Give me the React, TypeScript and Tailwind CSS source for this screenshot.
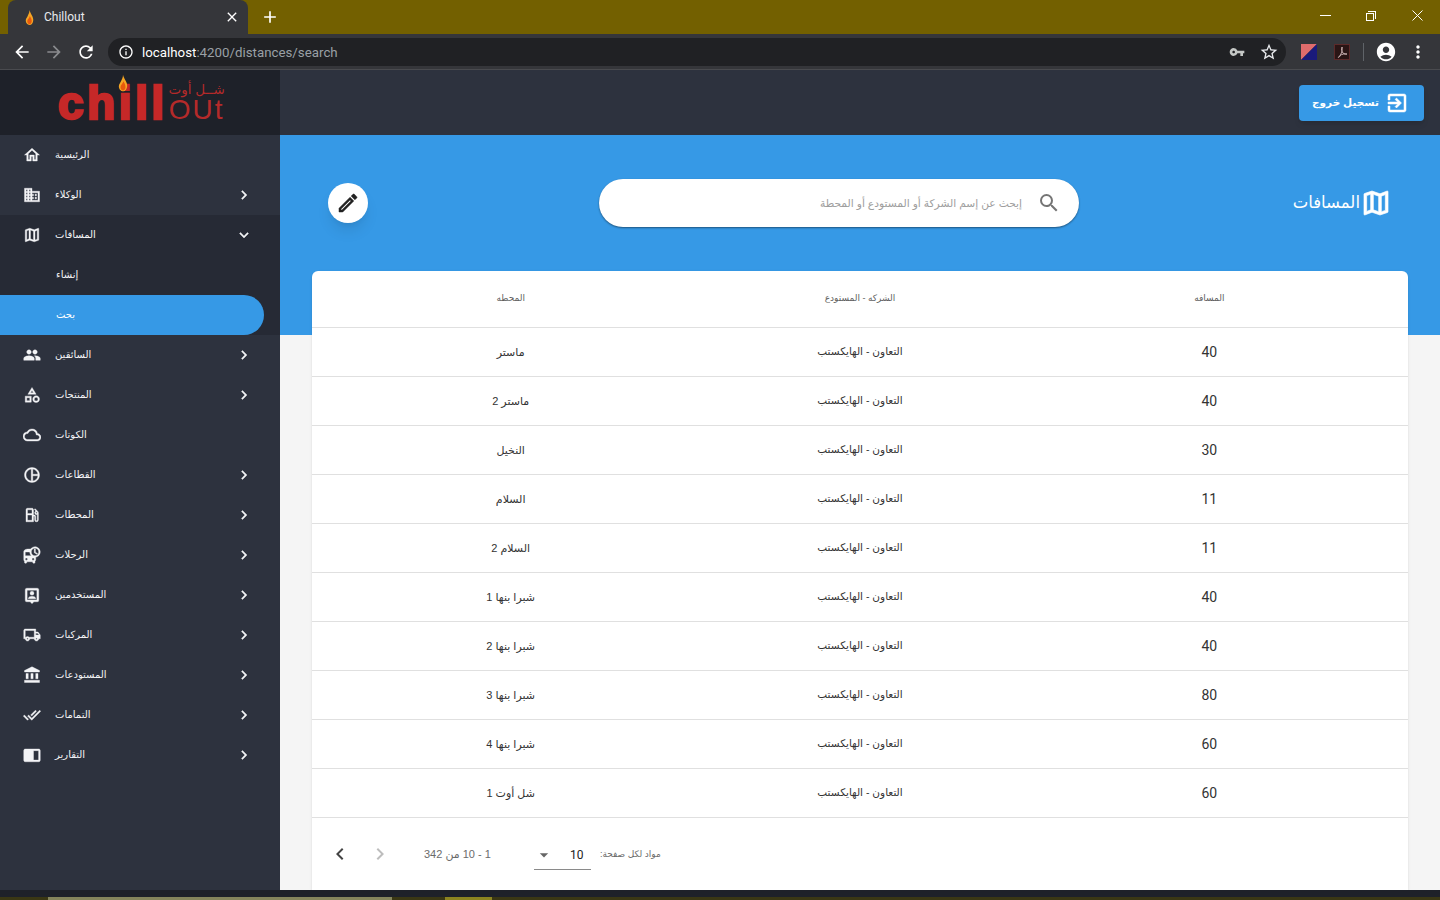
import {
  MdOutlineHome, MdDomain, MdOutlineMap, MdPeople, MdOutlineCategory, MdOutlineCloud, MdOutlinePieChart,
  MdOutlineLocalGasStation, MdDepartureBoard, MdOutlineLocalShipping,
  MdAccountBalance, MdDoneAll, MdChevronRight, MdExpandMore, MdOutlineEdit, MdSearch,
  MdChevronLeft, MdArrowDropDown, MdOutlineExitToApp, MdArrowBack, MdArrowForward, MdRefresh,
  MdInfoOutline, MdVpnKey, MdStarBorder, MdAccountCircle, MdMoreVert, MdClose, MdAdd,
} from "react-icons/md";

const arabic = "font-['Liberation_Sans','DejaVu_Sans',sans-serif]";
// thickens the material glyphs, the empty bounding box path must stay unstroked
const bold = "stroke-current stroke-[0.5] [&_path[fill='none']]:stroke-none";

function UsersIcon(props: { className?: string }) {
  return (
    <svg viewBox="0 0 24 24" fill="currentColor" {...props}>
      <path fillRule="evenodd" d="M5 3h14a2 2 0 0 1 2 2v14a2 2 0 0 1-2 2h-4.5L12 23.5 9.5 21H5a2 2 0 0 1-2-2V5a2 2 0 0 1 2-2zm.5 2.5v13h13v-13z" />
      <circle cx="12" cy="9.5" r="2.6" />
      <path d="M7 17c0-2.5 3-3.5 5-3.5s5 1 5 3.5z" />
    </svg>
  );
}

function ReportsIcon(props: { className?: string }) {
  return (
    <svg viewBox="0 0 24 24" fill="currentColor" {...props}>
      <path fillRule="evenodd" d="M3 4h18c1.1 0 2 .9 2 2v13c0 1.1-.9 2-2 2H3c-1.100 0-2-.9-2-2V6c0-1.100.9-2 2-2zm11 2.200V18.800h6.800V6.200z" />
    </svg>
  );
}

const menu = [
  { label: "الرئيسية", icon: MdOutlineHome },
  { label: "الوكلاء", icon: MdDomain, arrow: true },
  { label: "المسافات", icon: MdOutlineMap, open: true },
  { label: "السائقين", icon: MdPeople, arrow: true },
  { label: "المنتجات", icon: MdOutlineCategory, arrow: true },
  { label: "الكوتات", icon: MdOutlineCloud },
  { label: "القطاعات", icon: MdOutlinePieChart, arrow: true },
  { label: "المحطات", icon: MdOutlineLocalGasStation, arrow: true },
  { label: "الرحلات", icon: MdDepartureBoard, arrow: true },
  { label: "المستخدمين", icon: UsersIcon, arrow: true },
  { label: "المركبات", icon: MdOutlineLocalShipping, arrow: true },
  { label: "المستودعات", icon: MdAccountBalance, arrow: true },
  { label: "التمامات", icon: MdDoneAll, arrow: true },
  { label: "التقارير", icon: ReportsIcon, arrow: true },
];

const rows = [
  ["40", "ماستر"],
  ["40", "ماستر 2"],
  ["30", "النخيل"],
  ["11", "السلام"],
  ["11", "السلام 2"],
  ["40", "شبرا بنها 1"],
  ["40", "شبرا بنها 2"],
  ["80", "شبرا بنها 3"],
  ["60", "شبرا بنها 4"],
  ["60", "شل أوت 1"],
];

function Flame({ className }: { className: string }) {
  return (
    <svg viewBox="0 0 12 20" className={className}>
      <path d="M6 0C7 5 11 8 11 13c0 4-2 7-5 7s-5-3-5-6c0-3 2-4 3-7 1-2 2-4 2-7z" fill="#f5a524" />
      <path d="M6.500 8c1 2 2.500 4 2.500 7 0 2-1.500 4-3 4s-3-2-3-4c0-3 3-4 3.500-7z" fill="#e8590c" />
    </svg>
  );
}

function MenuRow({ item }: { item: (typeof menu)[number] }) {
  const Icon = item.icon;
  return (
    <div className="flex h-10 items-center pl-6 pr-[27px] text-[#f3f4f6]">
      <Icon className={`-ml-px h-4.5 w-4.5 shrink-0 ${bold}`} />
      <span dir="rtl" className={`ml-3.5 pb-0.5 text-[10px] ${arabic}`}>{item.label}</span>
      <span className="flex-1" />
      {item.arrow && <MdChevronRight className={`h-4.5 w-4.5 ${bold}`} />}
      {item.open && <MdExpandMore className={`h-4.5 w-4.5 ${bold}`} />}
    </div>
  );
}

function Sidebar() {
  return (
    <aside className="w-[280px] shrink-0 bg-[#2d323e]">
      <div className="relative h-[65px] bg-[#1e2129]">
        <div className="flex h-full items-end pb-[15px] pl-[58px]">
          <span className="font-['Liberation_Sans',sans-serif] text-[46px] font-bold leading-[33px] tracking-[3.500px] text-[#c62828] [-webkit-text-stroke:2.5px_#c62828]">chill</span>
          <div className="ml-[1px] flex flex-col items-center">
            <span dir="rtl" className={`mb-[3px] text-[13.500px] leading-[14px] text-[#b52a2a] ${arabic}`}>شــل أوت</span>
            <span className="font-['Liberation_Sans',sans-serif] text-[28px] leading-[20px] tracking-[2px] text-[#b52a2a]">OUt</span>
          </div>
        </div>
        <Flame className="absolute left-[118px] top-[3px] h-5 w-2.5" />
      </div>
      <nav>
        <MenuRow item={menu[0]} />
        <MenuRow item={menu[1]} />
        <div className="h-[120px] bg-[#262a35]">
          <MenuRow item={menu[2]} />
          <div className="flex h-10 items-center pl-14 text-[#f3f4f6]">
            <span dir="rtl" className={`pb-0.5 text-[10px] ${arabic}`}>إنشاء</span>
          </div>
          <div className="mr-4 flex h-10 items-center rounded-r-[20px] bg-[#3699e6] pl-14 text-white">
            <span dir="rtl" className={`pb-0.5 text-[10px] ${arabic}`}>بحث</span>
          </div>
        </div>
        {menu.slice(3).map((item) => <MenuRow key={item.label} item={item} />)}
      </nav>
    </aside>
  );
}

function BrowserChrome() {
  return (
    <div className="h-[70px] shrink-0">
      <div className="flex h-[34px] items-end bg-[#736000] pl-2">
        <div className="flex h-[34px] w-[240px] items-center rounded-t-lg bg-[#35363a] pl-[17px] pr-2 text-white">
          <Flame className="mr-2.5 h-[15px] w-[9px]" />
          <span className="flex-1 font-['Roboto',sans-serif] text-[12px] text-[#e8eaed]">Chillout</span>
          <MdClose className="h-4 w-4" />
        </div>
        <MdAdd className="mb-[7px] ml-[12px] h-5 w-5 text-white" />
        <div className="flex-1" />
        <div className="mb-[13px] flex items-center pr-[17px] text-white">
          <span className="h-px w-[11px] bg-white" />
          <span className="relative ml-[35px] mt-[2px] h-2 w-2 border border-white">
            <span className="absolute -right-[3px] -top-[3px] h-2 w-2 border-r border-t border-white" />
          </span>
          <svg viewBox="0 0 11 11" className="ml-[38px] h-[11px] w-[11px]" stroke="currentColor" strokeWidth="1">
            <path d="M0.500 0.500l10 10M10.500 0.500l-10 10" />
          </svg>
        </div>
      </div>
      <div className="flex h-[36px] items-center border-b border-[#4a4b4f] bg-[#35363a] pl-3 pr-3 pt-px">
        <MdArrowBack className="h-5 w-5 text-white" />
        <MdArrowForward className="ml-3 h-5 w-5 text-[#8a8b8e]" />
        <MdRefresh className="ml-3 h-5 w-5 text-white" />
        <div className="ml-3 flex h-7 flex-1 items-center rounded-full bg-[#202124] pl-2.5 pr-[7px]">
          <MdInfoOutline className="h-4 w-4 text-white" />
          <span className="ml-2 pt-px font-['Roboto',sans-serif] text-[13.300px] text-white">localhost<span className="text-[#9aa0a6]">:4200/distances/search</span></span>
          <span className="flex-1" />
          <MdVpnKey className="mr-3.5 h-4 w-4 text-[#c4c7c5]" />
          <MdStarBorder className="h-5 w-5 text-[#e8eaed]" />
        </div>
        <svg viewBox="0 0 16 16" className="ml-[15px] h-4 w-4">
          <path d="M0 0h16L0 16z" fill="#e06c6c" /><path d="M16 0v16H0z" fill="#1a1a7a" />
        </svg>
        <svg viewBox="0 0 16 16" className="ml-[17px] h-4 w-4">
          <rect x="0.500" y="0.500" width="15" height="15" fill="#2a1515" stroke="#5c2a2a" />
          <path d="M8 3c-1 2 0 5 1 6s3 1.500 4 1c-2-.5-5 0-7 1.500-1 1-2 2-1.500 2 1 0 3-4 3.500-7C8 5 8.500 3 8 3z" fill="none" stroke="#c9b0b0" strokeWidth="1" />
        </svg>
        <span className="ml-[13px] h-[18px] w-px bg-[#5f6368]" />
        <MdAccountCircle className="ml-[11px] h-[22px] w-[22px] text-white" />
        <MdMoreVert className="ml-[11px] h-5 w-5 text-white" />
      </div>
    </div>
  );
}

function DistancesTable() {
  return (
    <div dir="rtl" className="mx-8 flex flex-col rounded-t-md bg-white shadow-sm">
      <div className="grid h-[57px] grid-cols-3 items-center border-b border-[#e0e0e0] px-6 text-center">
        <span className={`text-[9px] text-[#5f5f5f] ${arabic}`}>المسافه</span>
        <span className={`text-[9px] text-[#5f5f5f] ${arabic}`}>الشركه - المستودع</span>
        <span className={`text-[9px] text-[#5f5f5f] ${arabic}`}>المحطه</span>
      </div>
      {rows.map((row, i) => (
        <div key={i} className="grid h-[49px] grid-cols-3 items-center border-b border-[#e0e0e0] px-6 text-center text-[#333]">
          <span className="font-['Roboto',sans-serif] text-[14px]">{row[0]}</span>
          <span className={`text-[10.500px] ${arabic}`}>التعاون - الهايكستب</span>
          <span className={`text-[11px] ${arabic}`}>{row[1]}</span>
        </div>
      ))}
      <div dir="ltr" className="flex h-[72px] items-center pl-4 text-[#6b6b6b]">
        <MdChevronLeft className="h-6 w-6 text-[#444]" />
        <MdChevronRight className="ml-4 h-6 w-6 text-[#bdbdbd]" />
        <span dir="rtl" className={`ml-8 text-[11px] ${arabic}`}>1 - 10 من 342</span>
        <div className="ml-[43px] mt-[2px] flex h-[30px] w-[57px] items-center border-b border-[#8a8a8a]">
          <MdArrowDropDown className="h-5 w-5 text-[#666]" />
          <span className="ml-4 font-['Roboto',sans-serif] text-[12px] text-[#222]">10</span>
        </div>
        <span dir="rtl" className={`ml-[9px] mt-[1px] text-[9px] ${arabic}`}>مواد لكل صفحة:</span>
      </div>
    </div>
  );
}

function Main() {
  return (
    <main className="flex min-w-0 flex-1 flex-col">
      <div className="flex h-[65px] shrink-0 items-center justify-end bg-[#2d323e] pr-4">
        <button className="mt-[1px] flex h-9 w-[125px] items-center gap-1.5 rounded bg-[#3699e6] pl-[13px] text-white shadow-md">
          <span dir="rtl" className={`text-[10.500px] font-bold ${arabic}`}>تسجيل خروج</span>
          <MdOutlineExitToApp className={`h-6 w-6 ${bold}`} />
        </button>
      </div>
      <div className="relative min-h-0 flex-1 overflow-hidden bg-[#f5f5f5]">
        <div className="absolute inset-x-0 top-0 h-[200px] bg-[#3699e6]" />
        <div className="relative">
          <div className="flex h-[136px] items-center pl-12 pr-12">
            <button className="flex h-10 w-10 items-center justify-center rounded-full bg-white text-[#222] shadow-lg">
              <MdOutlineEdit className={`h-6 w-6 ${bold}`} />
            </button>
            <div className="ml-[231px] flex h-12 w-[480px] items-center justify-end rounded-full bg-white pr-[18px] shadow-[0_1px_2px_rgba(0,0,0,0.45)]">
              <span dir="rtl" className={`text-[10.700px] text-[#9e9e9e] ${arabic}`}>إبحث عن إسم الشركة أو المستودع أو المحطة</span>
              <MdSearch className="ml-[15px] h-6 w-6 text-[#757575]" />
            </div>
            <div className="flex-1" />
            <div className="flex items-center text-white">
              <span dir="rtl" className={`pb-0.5 text-[16.500px] ${arabic}`}>المسافات</span>
              <MdOutlineMap className={`h-8 w-8 ${bold}`} />
            </div>
          </div>
          <DistancesTable />
        </div>
      </div>
    </main>
  );
}

export default function App() {
  return (
    <div className="flex h-[900px] w-[1440px] flex-col overflow-hidden bg-[#1e2129]">
      <BrowserChrome />
      <div className="flex h-[820px] min-h-0">
        <Sidebar />
        <Main />
      </div>
      <div className="h-[7px] shrink-0 bg-[#1e2129]" />
      <div className="flex h-[3px] shrink-0 bg-[#3a3714] pl-12">
        <span className="w-[344px] bg-[#85855c]" />
        <span className="ml-[53px] w-[47px] bg-[#8c8420]" />
      </div>
    </div>
  );
}
